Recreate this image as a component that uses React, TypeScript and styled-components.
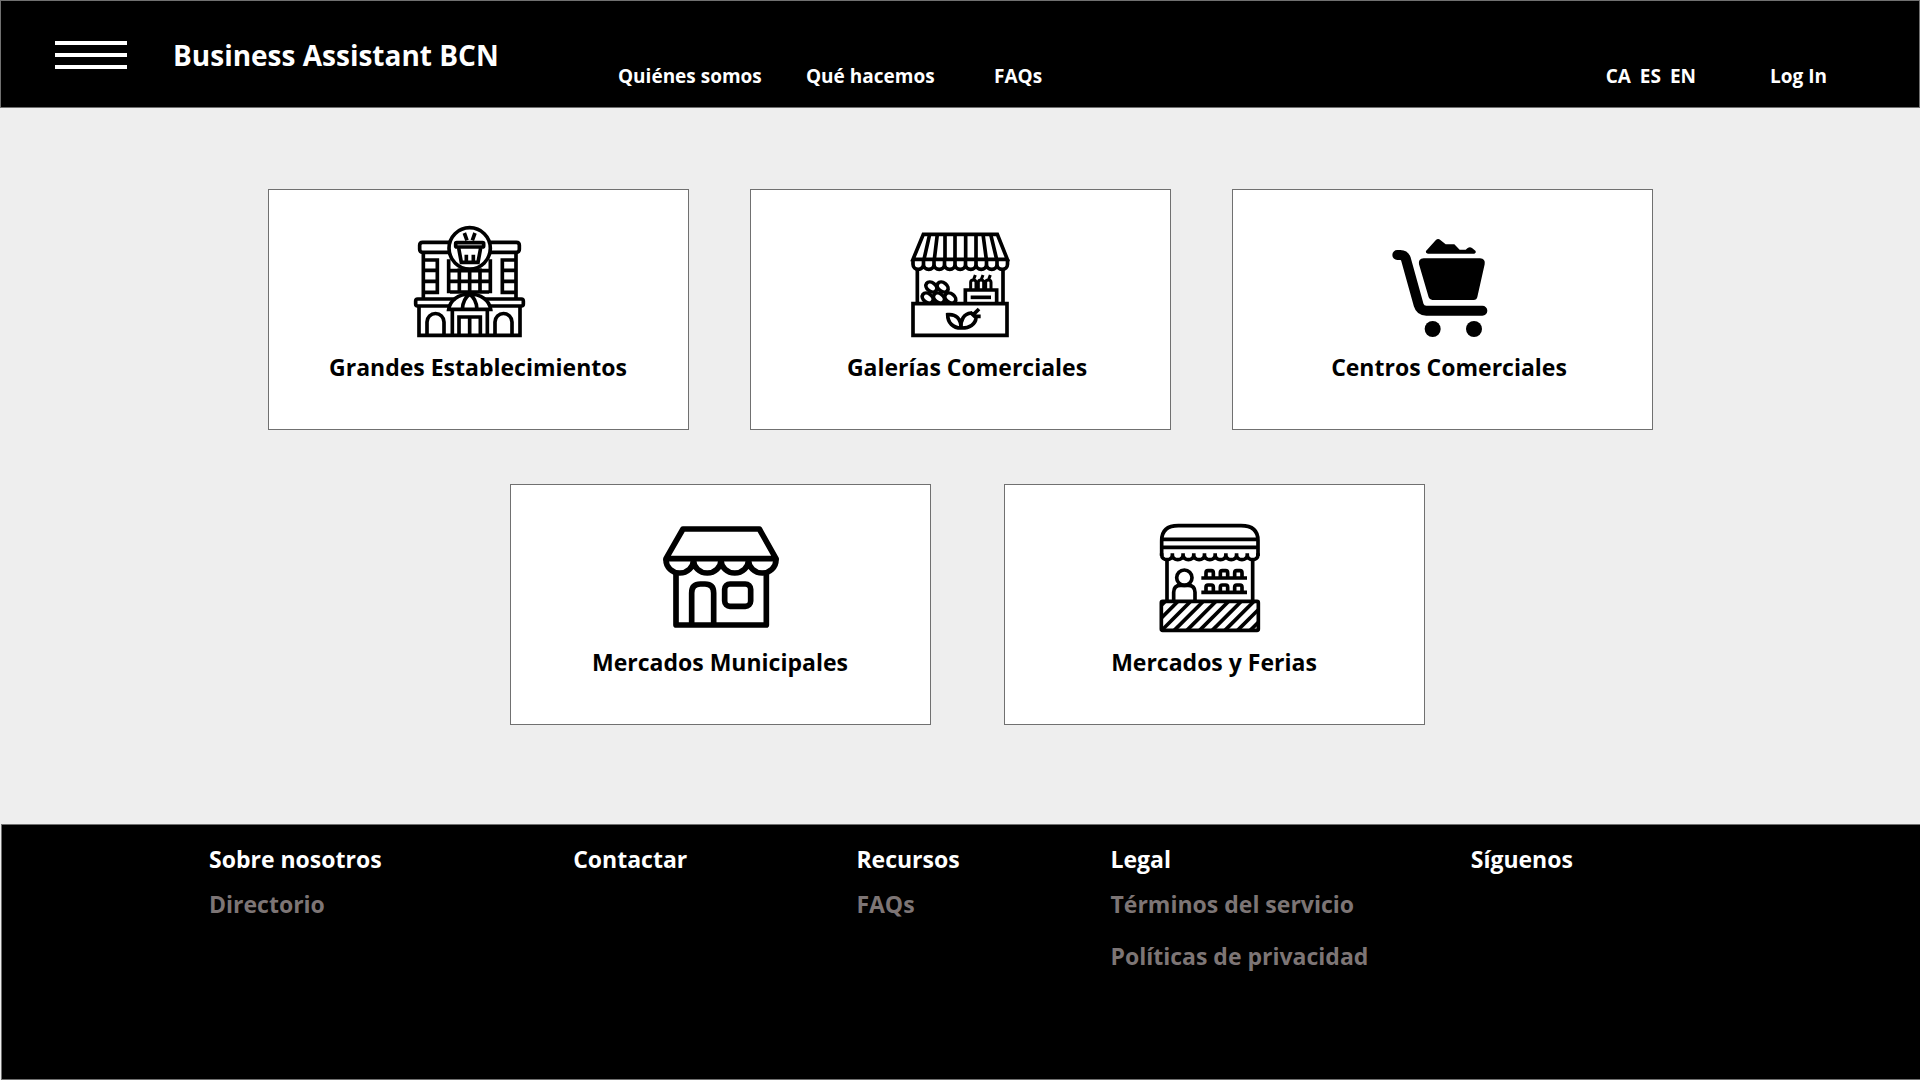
import React from "react";
import styled, { createGlobalStyle } from "styled-components";

const GlobalStyle = createGlobalStyle`
  * { box-sizing: border-box; }
  body {
    margin: 0;
    background: #eeeeee;
    font-family: "Segoe UI", "Open Sans", "Noto Sans", sans-serif;
    font-weight: 700;
  }
  a { color: inherit; text-decoration: none; }
`;

const Page = styled.div`
  min-height: 100vh;
  display: flex;
  flex-direction: column;
`;

const Header = styled.header`
  display: flex;
  align-items: flex-start;
  padding: 35px 92px 19px 54px;
  border: 1px solid #707070;
  background: #000;
  color: #fff;
`;

const MenuButton = styled.button`
  display: flex;
  flex-direction: column;
  gap: 8px;
  width: 72px;
  margin: 5px 46px 0 0;
  padding: 0;
  border: 0;
  background: none;
  cursor: pointer;
`;

const MenuBar = styled.span`
  height: 4px;
  background: #fff;
`;

const Brand = styled.h1`
  width: 445px;
  margin: 0;
  font-size: 28px;
  font-weight: 700;
  line-height: 38px;
`;

const Nav = styled.nav`
  display: grid;
  grid-template-columns: repeat(3, 188px);
  margin-top: 28px;
  font-size: 19px;
  line-height: 24px;
`;

const Tools = styled.div`
  display: flex;
  gap: 74px;
  margin: 28px 0 0 auto;
  font-size: 19px;
  line-height: 24px;
`;

const Languages = styled.div`
  display: flex;
  gap: 9px;
`;

const Main = styled.main`
  flex: 1;
  display: flex;
  flex-direction: column;
  gap: 54px;
  padding: 81px 0 98px;
`;

const CardRow = styled.div<{ $gap: number; $inset?: number }>`
  display: flex;
  justify-content: center;
  gap: ${(p) => p.$gap}px;
  padding-left: ${(p) => p.$inset ?? 0}px;
`;

const Card = styled.a`
  display: flex;
  flex-direction: column;
  align-items: center;
  width: 421px;
  padding: 20px 0 44px;
  border: 1px solid #707070;
  background: #fff;
  color: #000;
`;

const CardTitle = styled.h2<{ $inset?: number }>`
  margin: 0;
  padding-left: ${(p) => p.$inset ?? 0}px;
  font-size: 23px;
  font-weight: 700;
  line-height: 35px;
`;

const Picture = styled.svg`
  width: 140px;
  height: 140px;
  fill: none;
  stroke: #000;
  stroke-width: 11;
`;

const Footer = styled.footer`
  display: grid;
  grid-template-columns: 364fr 283fr 254fr 360fr 449fr;
  margin-left: 1px;
  padding: 15px 0 104px 207px;
  border: 1px solid #707070;
  border-right: 0;
  background: #000;
  color: #fff;
  font-size: 23px;
`;

const FooterTitle = styled.h3`
  margin: 0 0 7px;
  font-size: 23px;
  font-weight: 700;
  line-height: 38px;
`;

const FooterList = styled.ul`
  display: grid;
  gap: 14px;
  margin: 0;
  padding: 0;
  list-style: none;
  color: #7d7575;
  line-height: 38px;
`;

const DepartmentStore = () => (
  <Picture viewBox="24 0 420 420" aria-hidden="true">
    <circle cx="209" cy="115" r="62" />
    <path d="M193 69l8 22M225 69l-8 22" />
    <rect x="167" y="98" width="84" height="13" rx="3" />
    <path d="M176 114l8 43h50l8-43" />
    <path d="M199 134v22M220 134v22" />
    <path d="M147 97H68q-9 0-9 9v12q0 9 9 9h81M271 97h78q9 0 9 9v12q0 9-9 9h-81" />
    <path d="M70 127v138M348 127v138M70 150h42v97H70M70 181h42M70 214h42M348 150h-41v97h41M348 181h-41M348 214h-41" />
    <path d="M146 148v102M271 148v102M146 182h125M146 214h125M150 246h117M178 175v75M209 178v76M240 175v75" />
    <path d="M166 267H53q-6 0-6 6v9q0 6 6 6h98M252 267h112q6 0 6 6v9q0 6-6 6h-97" />
    <path d="M146 298c4-28 30-46 63-46s59 18 63 46zM187 298c1-18 9-36 22-45 13 9 21 27 22 45" />
    <path d="M57 288v88h303v-88M157 300v76M262 300v76M177 376v-55h64v55M209 321v55" />
    <path d="M81 376v-40a25 25 0 0 1 51 0v40M285 376v-40a25 25 0 0 1 51 0v40" />
  </Picture>
);

const scallops = (count: number, x: number, y: number, step: number, drop: number, depth: number) =>
  Array.from(
    { length: count },
    (_, i) => `M${x + i * step} ${y}v${drop}a${step / 2} ${depth} 0 0 0 ${step} 0v${-drop}`
  ).join("");

const Greengrocer = () => (
  <Picture viewBox="0 0 420 420" aria-hidden="true">
    <path d="M100 73h222l30 75H69z" />
    <path d="M119 73l-17 75M142 73l-9 75M165 73v75M195 73v75M227 73v75M258 73v75M279 73l10 75M302 73l18 75" />
    <path d={scallops(9, 69, 148, 31.5, 15, 15)} />
    <path d="M82 178v102M339 178v102M69 281h282v95H69z" />
    {[[124, 231], [158, 231], [113, 264], [147, 264], [181, 264]].map(([x, y]) => (
      <ellipse key={`${x}-${y}`} cx={x} cy={y} rx="18" ry="13" transform={`rotate(38 ${x} ${y})`} />
    ))}
    <path d="M226 278v-38h94v38" />
    <path d="M242 262h61" />
    <path d="M242 238v-21q0-7 8-7t8 7v21M265 238v-21q0-7 8-7t8 7v21M287 238v-21q0-7 8-7t8 7v21M250 211l6-16M273 211l6-16M295 211l6-16" strokeWidth="9" />
    <path d="M213 354c-24 0-40-16-40-40 25-3 40 13 40 40zM213 354c-2-24 9-43 30-45l15 14c-1 20-20 32-45 31zM250 314l17-17M256 319h16" />
  </Picture>
);

const Cart = () => (
  <Picture viewBox="-23 0 420 420" aria-hidden="true">
    <path d="M53 135h9q13 0 17 13l38 137q5 17 23 17h168" strokeWidth="30" strokeLinecap="round" />
    <g fill="#000" stroke="none">
      <path d="M132 145h169q17 1 14 18l-22 98q-2 9-11 9H158q-8 0-11-8l-29-99q-3-17 14-18z" />
      <path d="M145 131q-8-1-6-8l29-32q7-7 14-1l16 13h26l16 16h18l6-5q7-4 13 0l11 9q2 7-4 8z" />
      <circle cx="159" cy="357" r="24" />
      <circle cx="283" cy="357" r="24" />
    </g>
  </Picture>
);

const Shop = () => (
  <Picture viewBox="0 -15 420 420" aria-hidden="true">
    <g strokeWidth="17" strokeLinejoin="round">
      <path d="M99 57h229l50 89H48z" />
      <path d={scallops(4, 48, 146, 82.5, 4, 39)} />
      <path d="M78 188v157h271V188M125 345v-96q0-27 26-27h14q26 0 26 27v96" />
      <rect x="224" y="222" width="78" height="67" rx="16" />
    </g>
  </Picture>
);

const Stall = () => (
  <Picture viewBox="13 -15 420 420" aria-hidden="true">
    <defs>
      <clipPath id="counter">
        <rect x="65" y="274" width="291" height="87" />
      </clipPath>
    </defs>
    <path d="M66 138V92q0-45 50-45h188q51 0 51 45v46M66 88h289M66 112h289" />
    <path d={scallops(9, 66, 130, 32.1, 5, 14)} />
    <path d="M82 152v122M339 152v122" />
    <rect x="65" y="274" width="291" height="87" rx="4" />
    <g clipPath="url(#counter)">
      {Array.from({ length: 10 }, (_, i) => (
        <path key={i} d={`M${-14 + i * 38} 365l95-95`} />
      ))}
    </g>
    <circle cx="134" cy="203" r="23" />
    <path d="M102 272v-25q0-21 21-21h22q21 0 21 21v25" />
    <path d="M185 204h137M185 247h137" />
    {[210, 253, 296].map((x) => (
      <path key={x} d={`M${x - 11} 203v-14q0-7 6-7h10q6 0 6 7v14M${x - 11} 246v-14q0-7 6-7h10q6 0 6 7v14`} />
    ))}
  </Picture>
);

const columns = [
  { title: "Sobre nosotros", links: ["Directorio"] },
  { title: "Contactar", links: [] },
  { title: "Recursos", links: ["FAQs"] },
  { title: "Legal", links: ["Términos del servicio", "Políticas de privacidad"] },
  { title: "Síguenos", links: [] },
];

export default function App() {
  return (
    <Page>
      <GlobalStyle />
      <Header>
        <MenuButton type="button" aria-label="Menú">
          <MenuBar />
          <MenuBar />
          <MenuBar />
        </MenuButton>
        <Brand>Business Assistant BCN</Brand>
        <Nav>
          <a href="#quienes">Quiénes somos</a>
          <a href="#que">Qué hacemos</a>
          <a href="#faqs">FAQs</a>
        </Nav>
        <Tools>
          <Languages>
            <a href="#ca">CA</a>
            <a href="#es">ES</a>
            <a href="#en">EN</a>
          </Languages>
          <a href="#login">Log In</a>
        </Tools>
      </Header>
      <Main>
        <CardRow $gap={61}>
          <Card href="#grandes">
            <DepartmentStore />
            <CardTitle>Grandes Establecimientos</CardTitle>
          </Card>
          <Card href="#galerias">
            <Greengrocer />
            <CardTitle $inset={14}>Galerías Comerciales</CardTitle>
          </Card>
          <Card href="#centros">
            <Cart />
            <CardTitle $inset={14}>Centros Comerciales</CardTitle>
          </Card>
        </CardRow>
        <CardRow $gap={73} $inset={14}>
          <Card href="#municipales">
            <Shop />
            <CardTitle>Mercados Municipales</CardTitle>
          </Card>
          <Card href="#ferias">
            <Stall />
            <CardTitle>Mercados y Ferias</CardTitle>
          </Card>
        </CardRow>
      </Main>
      <Footer>
        {columns.map((column) => (
          <section key={column.title}>
            <FooterTitle>{column.title}</FooterTitle>
            <FooterList>
              {column.links.map((link) => (
                <li key={link}>
                  <a href="#info">{link}</a>
                </li>
              ))}
            </FooterList>
          </section>
        ))}
      </Footer>
    </Page>
  );
}
